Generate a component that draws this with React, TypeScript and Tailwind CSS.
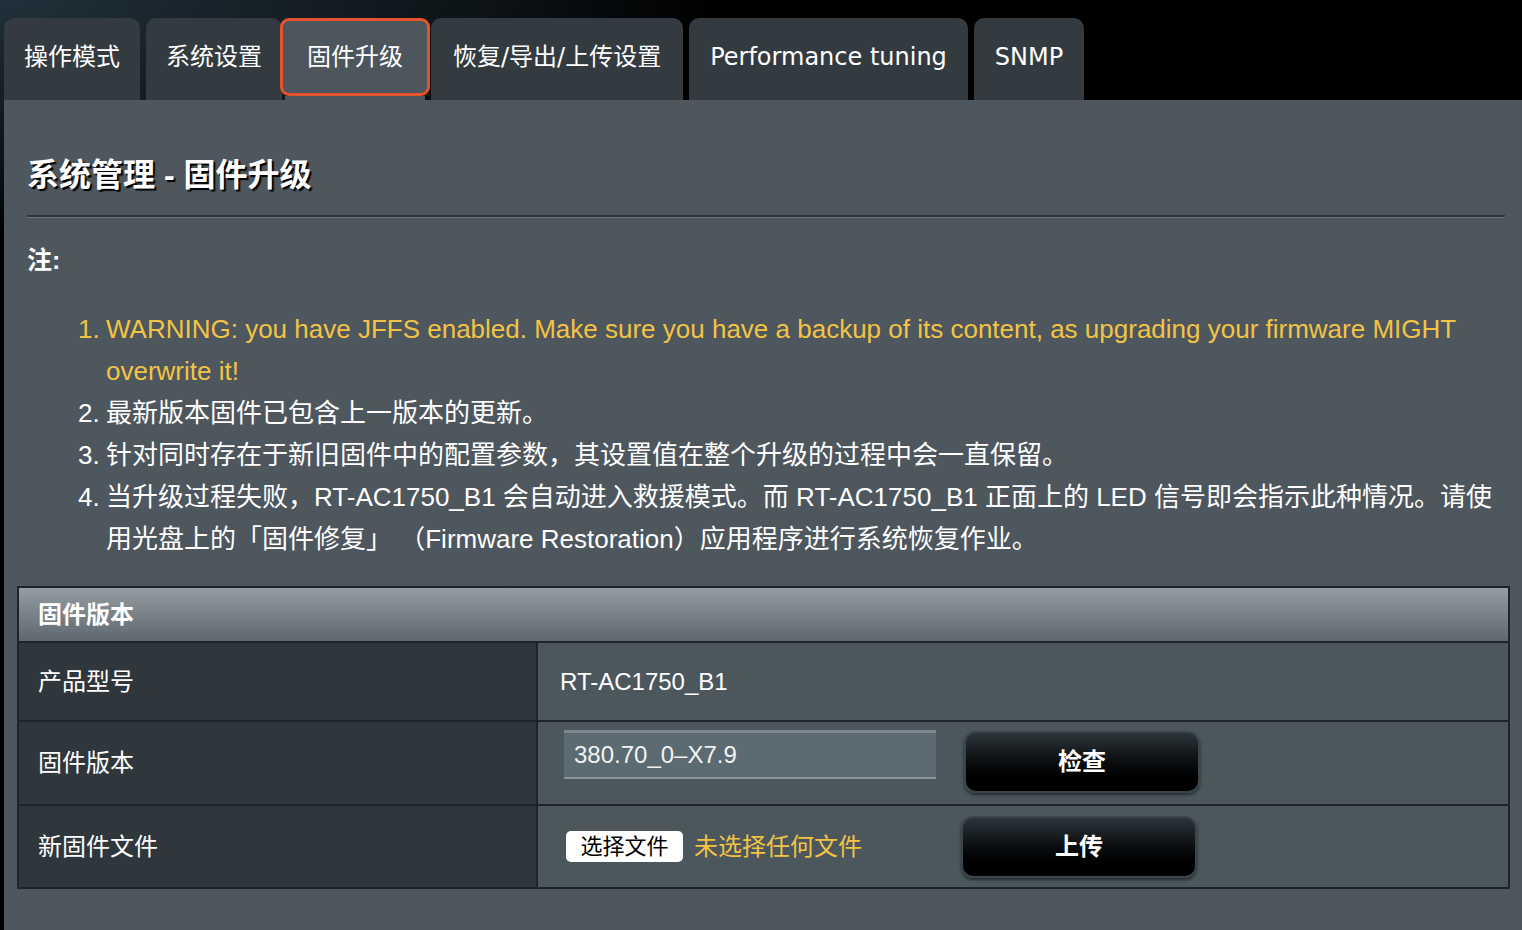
import React from 'react';

const cjk = "font-['Liberation_Sans','Noto_Sans_CJK_SC',sans-serif]";
const tabFont = "font-['DejaVu_Sans','Noto_Sans_CJK_SC',sans-serif]";

const tabs = [
  { label: '操作模式', pad: 'px-[20px]' },
  { label: '系统设置', pad: 'px-[20px]' },
  { label: '固件升级', pad: 'px-[24px]' },
  { label: '恢复/导出/上传设置', pad: 'px-[22px]' },
  { label: 'Performance tuning', pad: 'px-[21px]' },
  { label: 'SNMP', pad: 'px-[21px]' },
];

function Tabs() {
  return (
    <div className="flex items-end gap-[6px] pl-[4px] pt-[18px] h-[100px]">
      {tabs.map((t, i) =>
        i === 2 ? (
          <div key={t.label} className="-ml-[8px] -mr-[5px] flex flex-col h-[82px]">
            <div className={`h-[78px] rounded-[9px] border-[3px] border-[#e4532b] bg-[#4d565d] ${t.pad} pt-[21px] text-[24px] leading-[30px] text-white`}>
              {t.label}
            </div>
            <div className="mx-[5px] flex-1 bg-[#4d565d]" />
          </div>
        ) : (
          <div
            key={t.label}
            className={`h-[82px] rounded-t-[10px] bg-[#343b40] ${t.pad} pt-[24px] text-[24px] leading-[30px] text-white`}
          >
            {t.label}
          </div>
        )
      )}
    </div>
  );
}

const notes: { n: string; text: string; warn?: boolean }[] = [
  {
    n: '1.',
    text: 'WARNING: you have JFFS enabled. Make sure you have a backup of its content, as upgrading your firmware MIGHT overwrite it!',
    warn: true,
  },
  { n: '2.', text: '最新版本固件已包含上一版本的更新。' },
  { n: '3.', text: '针对同时存在于新旧固件中的配置参数，其设置值在整个升级的过程中会一直保留。' },
  {
    n: '4.',
    text: '当升级过程失败，RT-AC1750_B1 会自动进入救援模式。而 RT-AC1750_B1 正面上的 LED 信号即会指示此种情况。请使用光盘上的「固件修复」 （Firmware Restoration）应用程序进行系统恢复作业。',
  },
];

function BlackButton({ label }: { label: string }) {
  return (
    <button className="w-[236px] h-[62px] rounded-[12px] border-2 border-[#3c454b] bg-gradient-to-b from-[#2c353a] via-[#0b0e10] to-[#000] text-[24px] font-bold text-white shadow-[0_2px_3px_rgba(0,0,0,0.5)]">
      {label}
    </button>
  );
}

export default function App() {
  return (
    <div className={`min-h-[930px] w-full overflow-hidden bg-[radial-gradient(ellipse_900px_300px_at_0%_0%,#20303a_0%,#0c1215_55%,#000_80%)] ${cjk}`}>
      <div className={tabFont}>
        <Tabs />
      </div>

      <div className="ml-[4px] min-h-[830px] bg-[#4e575e] pt-[54px] pb-[40px]">
        <h1 className="ml-[23px] text-[32px] leading-[42px] font-bold text-white [text-shadow:2px_2px_1px_#000]">
          系统管理 - 固件升级
        </h1>
        <div className="ml-[23px] mr-[17px] mt-[19px] h-[3px] border-t-2 border-[#30373c] bg-[#6c767c]" />

        <div className="ml-[23px] mt-[24px] text-[25px] leading-[36px] font-bold text-white">注:</div>

        <div className="mt-[30px] ml-[74px] mr-[26px] text-[26px] leading-[42px]">
          {notes.map(item => (
            <div key={item.n} className={`flex ${item.warn ? 'text-[#f3c444]' : 'text-white'}`}>
              <span className="w-[28px] shrink-0">{item.n}</span>
              <div className="flex-1">{item.text}</div>
            </div>
          ))}
        </div>

        {/* firmware version table */}
        <div className="ml-[13px] mr-[12px] mt-[26px] border-2 border-[#1f2428] text-white">
          <div className="h-[55px] flex items-center bg-gradient-to-b from-[#949da2] to-[#5f686e] pl-[19px] text-[24px] font-bold border-b-2 border-[#1f2428]">
            固件版本
          </div>

          <div className="flex h-[79px] border-b-2 border-[#1f2428]">
            <div className="w-[519px] shrink-0 flex items-center bg-[#30373c] pl-[19px] text-[24px] border-r-2 border-[#1f2428]">
              产品型号
            </div>
            <div className="flex-1 flex items-center bg-[#4b575d] pl-[22px] text-[24px]">RT-AC1750_B1</div>
          </div>

          <div className="flex h-[84px] border-b-2 border-[#1f2428]">
            <div className="w-[519px] shrink-0 flex items-center bg-[#30373c] pl-[19px] text-[24px] border-r-2 border-[#1f2428]">
              固件版本
            </div>
            <div className="flex-1 flex items-start bg-[#4b575d] pl-[26px] pt-[8px]">
              <div className="w-[372px] h-[49px] flex items-center bg-[#5c6a71] border-t-[3px] border-[#7b878d] border-b-2 border-b-[#88939a] pl-[10px] text-[24px] text-[#f2f2f2]">
                380.70_0–X7.9
              </div>
              <div className="ml-[28px] mt-[1px]">
                <BlackButton label="检查" />
              </div>
            </div>
          </div>

          <div className="flex h-[81px]">
            <div className="w-[519px] shrink-0 flex items-center bg-[#30373c] pl-[19px] text-[24px] border-r-2 border-[#1f2428]">
              新固件文件
            </div>
            <div className="flex-1 flex items-center bg-[#4b575d] pl-[28px]">
              <span className="h-[31px] w-[117px] flex items-center justify-center rounded-[5px] bg-white text-[22px] text-black">
                选择文件
              </span>
              <span className="ml-[11px] text-[24px] text-[#f3c444]">未选择任何文件</span>
              <div className="ml-[99px]">
                <BlackButton label="上传" />
              </div>
            </div>
          </div>
        </div>
      </div>
    </div>
  );
}
